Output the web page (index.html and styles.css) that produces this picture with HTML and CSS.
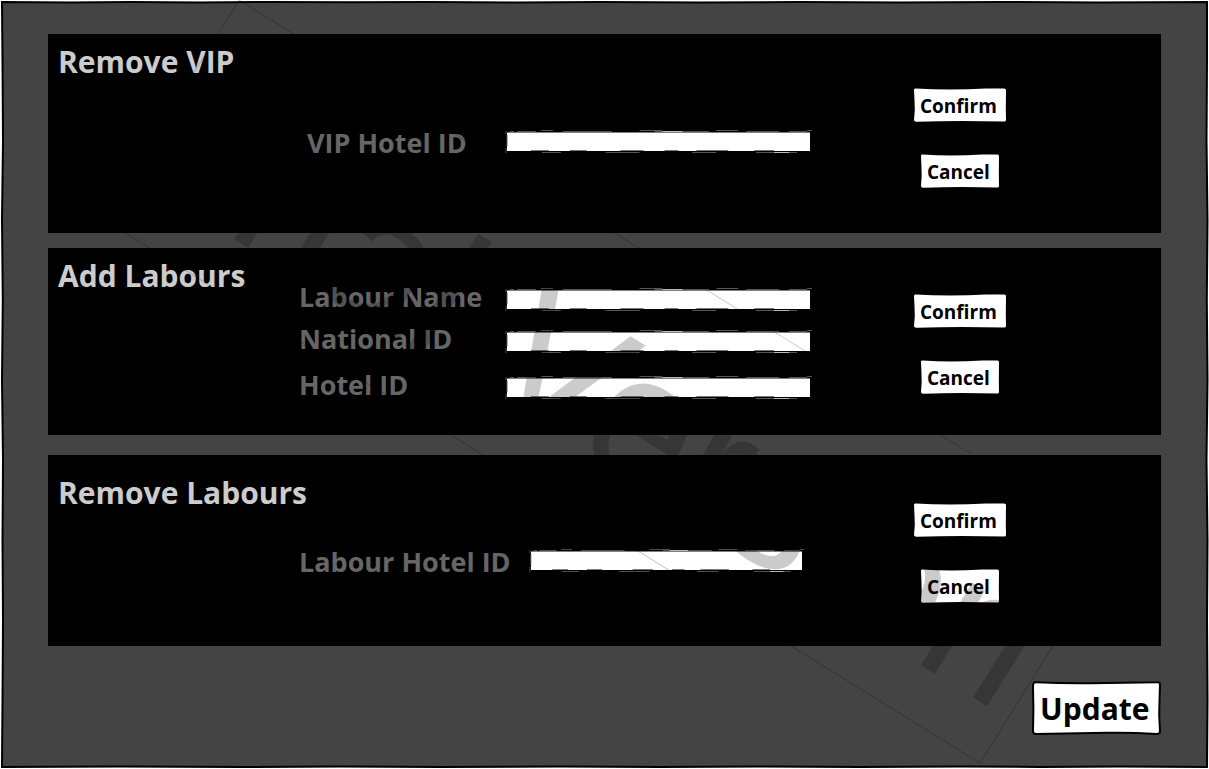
FILE: index.html
```html
<!DOCTYPE html>
<html lang="en">
<head>
<meta charset="utf-8">
<meta name="viewport" content="width=device-width, initial-scale=1">
<title>Hotel management</title>
<link rel="stylesheet" href="styles.css">
</head>
<body>
<svg class="defs" aria-hidden="true">
  <defs>
    <symbol id="field-edge" viewBox="0 0 308 24" preserveAspectRatio="none">
      <path d="M0 1H308M0 22.500H308" stroke="#000" stroke-width="3"/>
      <path d="M1 0V24M307 0V24" stroke="#000" stroke-width="2"/>
      <path d="M1 1V4M1 18V23M2 5V16M5 1.500H9M12 1.500H31M36 .5H48M58 1.500H107M135 .5H158M150 1.500H205M212 .5H234M242 1.500H275M285 1.500H303M303 .5H308" stroke="#555"/>
      <path d="M26 20.500H44M65 20.500H82M116 20.500H139M160 20.500H174M192 20.500H224M250 20.500H270" stroke="#777"/>
      <path d="M37 22.500H56M101 22.500H135M188 22.500H212M252 22.500H293" stroke="#555"/>
      <path d="M158 1.500H178M270 22.500H285" stroke="#bbb"/>
    </symbol>
    <symbol id="button-edge" viewBox="0 0 92 34" preserveAspectRatio="none">
      <path d="M2 .5Q18 1.500 36 1.500T72 .5L90 .5Q92 .5 92 2L91.800 20 92 32Q92 33.500 90 33.500Q70 33 48 33T3 33.800Q0 34 0 32L.8 22 .5 12 0 2Q0 0 2 .5Z" fill="#fff"/>
    </symbol>
    <symbol id="primary-edge" viewBox="0 0 129 54" preserveAspectRatio="none">
      <path d="M4 1.200Q30 2.500 58 2.200T125 1.200Q128 1 128 4L127.500 20 127.200 34 128 50Q128 53 125 53Q100 51.500 76 51.800T4 53Q1 53 1 50L1.400 28 1 5Q1 1 4 1.200Z" fill="#fff" stroke="#000" stroke-width="2"/>
    </symbol>
  </defs>
</svg>
<main class="screen">
  <svg class="screen-frame" viewBox="0 0 1209 769" preserveAspectRatio="none" aria-hidden="true">
    <path d="M2 2L70 2.500 130 2 200 2.500 270 2 350 2.300 430 2 520 2.500 600 2 700 2.500 800 2 900 2.500 1000 2 1100 2.500 1207 2L1207 60 1206.500 140 1207.500 220 1206.800 300 1207.500 380 1206.500 460 1207.500 540 1207 620 1207.500 700 1207 767L1120 766.500 1040 767 960 766.500 860 767 760 766.500 660 767 560 766.500 440 767 340 766.500 240 767 120 766.500 2 767L2.500 700 3 620 2.500 540 3 460 2 380 2.800 300 2 220 3 140 2.500 60Z" fill="#444" stroke="#000" stroke-width="2"/>
  </svg>

  <form class="panel panel-remove-vip">
    <h2 class="panel-title">Remove VIP</h2>
    <div class="fields">
      <div class="field field-inset">
        <label class="field-label" for="vip-id">VIP Hotel ID</label>
        <span class="field-box"><input class="field-input" id="vip-id" type="text"><svg class="field-edge" aria-hidden="true"><use href="#field-edge"/></svg></span>
      </div>
    </div>
    <div class="actions">
      <button class="button" type="button"><svg class="button-edge" aria-hidden="true"><use href="#button-edge"/></svg><span class="button-text">Confirm</span></button>
      <button class="button button-small" type="button"><svg class="button-edge" aria-hidden="true"><use href="#button-edge"/></svg><span class="button-text">Cancel</span></button>
    </div>
  </form>

  <form class="panel panel-add-labours">
    <h2 class="panel-title">Add Labours</h2>
    <div class="fields">
      <div class="field">
        <label class="field-label" for="labour-name">Labour Name</label>
        <span class="field-box"><input class="field-input" id="labour-name" type="text"><svg class="field-edge" aria-hidden="true"><use href="#field-edge"/></svg></span>
      </div>
      <div class="field">
        <label class="field-label" for="national-id">National ID</label>
        <span class="field-box"><input class="field-input" id="national-id" type="text"><svg class="field-edge" aria-hidden="true"><use href="#field-edge"/></svg></span>
      </div>
      <div class="field field-apart">
        <label class="field-label" for="hotel-id">Hotel ID</label>
        <span class="field-box"><input class="field-input" id="hotel-id" type="text"><svg class="field-edge" aria-hidden="true"><use href="#field-edge"/></svg></span>
      </div>
    </div>
    <div class="actions">
      <button class="button" type="button"><svg class="button-edge" aria-hidden="true"><use href="#button-edge"/></svg><span class="button-text">Confirm</span></button>
      <button class="button button-small" type="button"><svg class="button-edge" aria-hidden="true"><use href="#button-edge"/></svg><span class="button-text">Cancel</span></button>
    </div>
  </form>

  <form class="panel panel-remove-labours">
    <h2 class="panel-title">Remove Labours</h2>
    <div class="fields">
      <div class="field field-long">
        <label class="field-label" for="labour-id">Labour Hotel ID</label>
        <span class="field-box"><input class="field-input" id="labour-id" type="text"><svg class="field-edge" aria-hidden="true"><use href="#field-edge"/></svg></span>
      </div>
    </div>
    <div class="actions">
      <button class="button" type="button"><svg class="button-edge" aria-hidden="true"><use href="#button-edge"/></svg><span class="button-text">Confirm</span></button>
      <button class="button button-small" type="button"><svg class="button-edge" aria-hidden="true"><use href="#button-edge"/></svg><span class="button-text">Cancel</span></button>
    </div>
  </form>

  <div class="footer">
    <button class="button button-primary" type="button"><svg class="button-edge" aria-hidden="true"><use href="#primary-edge"/></svg><span class="button-text">Update</span></button>
  </div>

  <svg class="watermark" viewBox="0 0 1209 769" aria-hidden="true">
    <g transform="translate(239 0) rotate(31.800)">
      <rect class="watermark-box" x="0" y="0" width="1032" height="258"/>
      <text class="watermark-text" x="4" y="206">Trial Version</text>
    </g>
  </svg>
</main>
</body>
</html>
```

FILE: styles.css
```css
* {
  box-sizing: border-box;
}

body {
  margin: 0;
  background: #fff;
  font-family: "Open Sans", "Noto Sans", sans-serif;
  font-weight: 700;
}

.defs {
  position: absolute;
  width: 0;
  height: 0;
}

.screen {
  position: relative;
  min-height: 100vh;
  padding: 34px 48px;
  overflow: hidden;
}

.screen-frame {
  position: absolute;
  inset: 0;
  width: 100%;
  height: 100%;
}

.panel {
  position: relative;
  display: grid;
  grid-template-columns: minmax(0, 241fr) minmax(0, 513fr) minmax(0, 349fr);
  padding-left: 10px;
  background: #000;
}

.panel-remove-vip {
  min-height: 199px;
  margin-bottom: 15px;
}

.panel-add-labours {
  min-height: 187px;
  margin-bottom: 20px;
}

.panel-remove-labours {
  min-height: 191px;
  margin-bottom: 35px;
}

.panel-title {
  margin: 0;
  padding-top: 6px;
  color: #ccc;
  font-size: 30px;
  line-height: 44px;
  white-space: nowrap;
}

.panel-remove-labours .panel-title {
  padding-top: 16px;
}

.fields {
  display: flex;
  flex-direction: column;
  gap: 18px;
}

.panel-remove-vip .fields {
  padding-top: 96px;
}

.panel-add-labours .fields {
  padding-top: 40px;
}

.panel-remove-labours .fields {
  padding-top: 94px;
}

.field {
  display: flex;
  height: 24px;
}

.field-apart {
  margin-top: 4px;
}

.field-label {
  flex: none;
  width: 206px;
  color: #666;
  font-size: 27px;
  line-height: 26px;
  white-space: nowrap;
}

.panel-add-labours .field-label {
  line-height: 18px;
}

.field-inset .field-label {
  padding-left: 8px;
}

.field-long .field-label {
  width: 230px;
}

.field-long {
  padding-right: 8px;
}

.field-box {
  position: relative;
  flex: 1;
}

.field-input {
  display: block;
  width: 100%;
  height: 24px;
  padding: 0 6px;
  border: 2px solid #000;
  border-radius: 0;
  background: #fff;
  font: inherit;
  font-size: 14px;
}

.field-edge {
  position: absolute;
  inset: 0;
  width: 100%;
  height: 100%;
  pointer-events: none;
}

.actions {
  display: flex;
  flex-direction: column;
  align-items: center;
  gap: 32px;
  padding-right: 53px;
}

.panel-remove-vip .actions {
  padding-top: 54px;
}

.panel-add-labours .actions {
  padding-top: 46px;
}

.panel-remove-labours .actions {
  padding-top: 48px;
}

.button {
  position: relative;
  width: 92px;
  height: 34px;
  padding: 2px 0 0 6px;
  border: 0;
  background: none;
  color: #000;
  font: inherit;
  font-size: 19px;
  line-height: 32px;
  text-align: left;
}

.button-small {
  width: 78px;
}

.button-primary {
  width: 129px;
  height: 54px;
  padding-left: 8px;
  font-size: 30px;
  line-height: 52px;
}

.button-edge {
  position: absolute;
  inset: 0;
  width: 100%;
  height: 100%;
}

.button-text {
  position: relative;
}

.footer {
  display: flex;
  justify-content: flex-end;
}

.watermark {
  position: absolute;
  top: 0;
  left: 0;
  width: 1209px;
  height: 769px;
  opacity: 0.2;
  pointer-events: none;
}

.watermark-box {
  fill: none;
  stroke: #000;
}

.watermark-text {
  font-family: "Liberation Sans", Arial, sans-serif;
  font-size: 184px;
  font-weight: 400;
}
```
